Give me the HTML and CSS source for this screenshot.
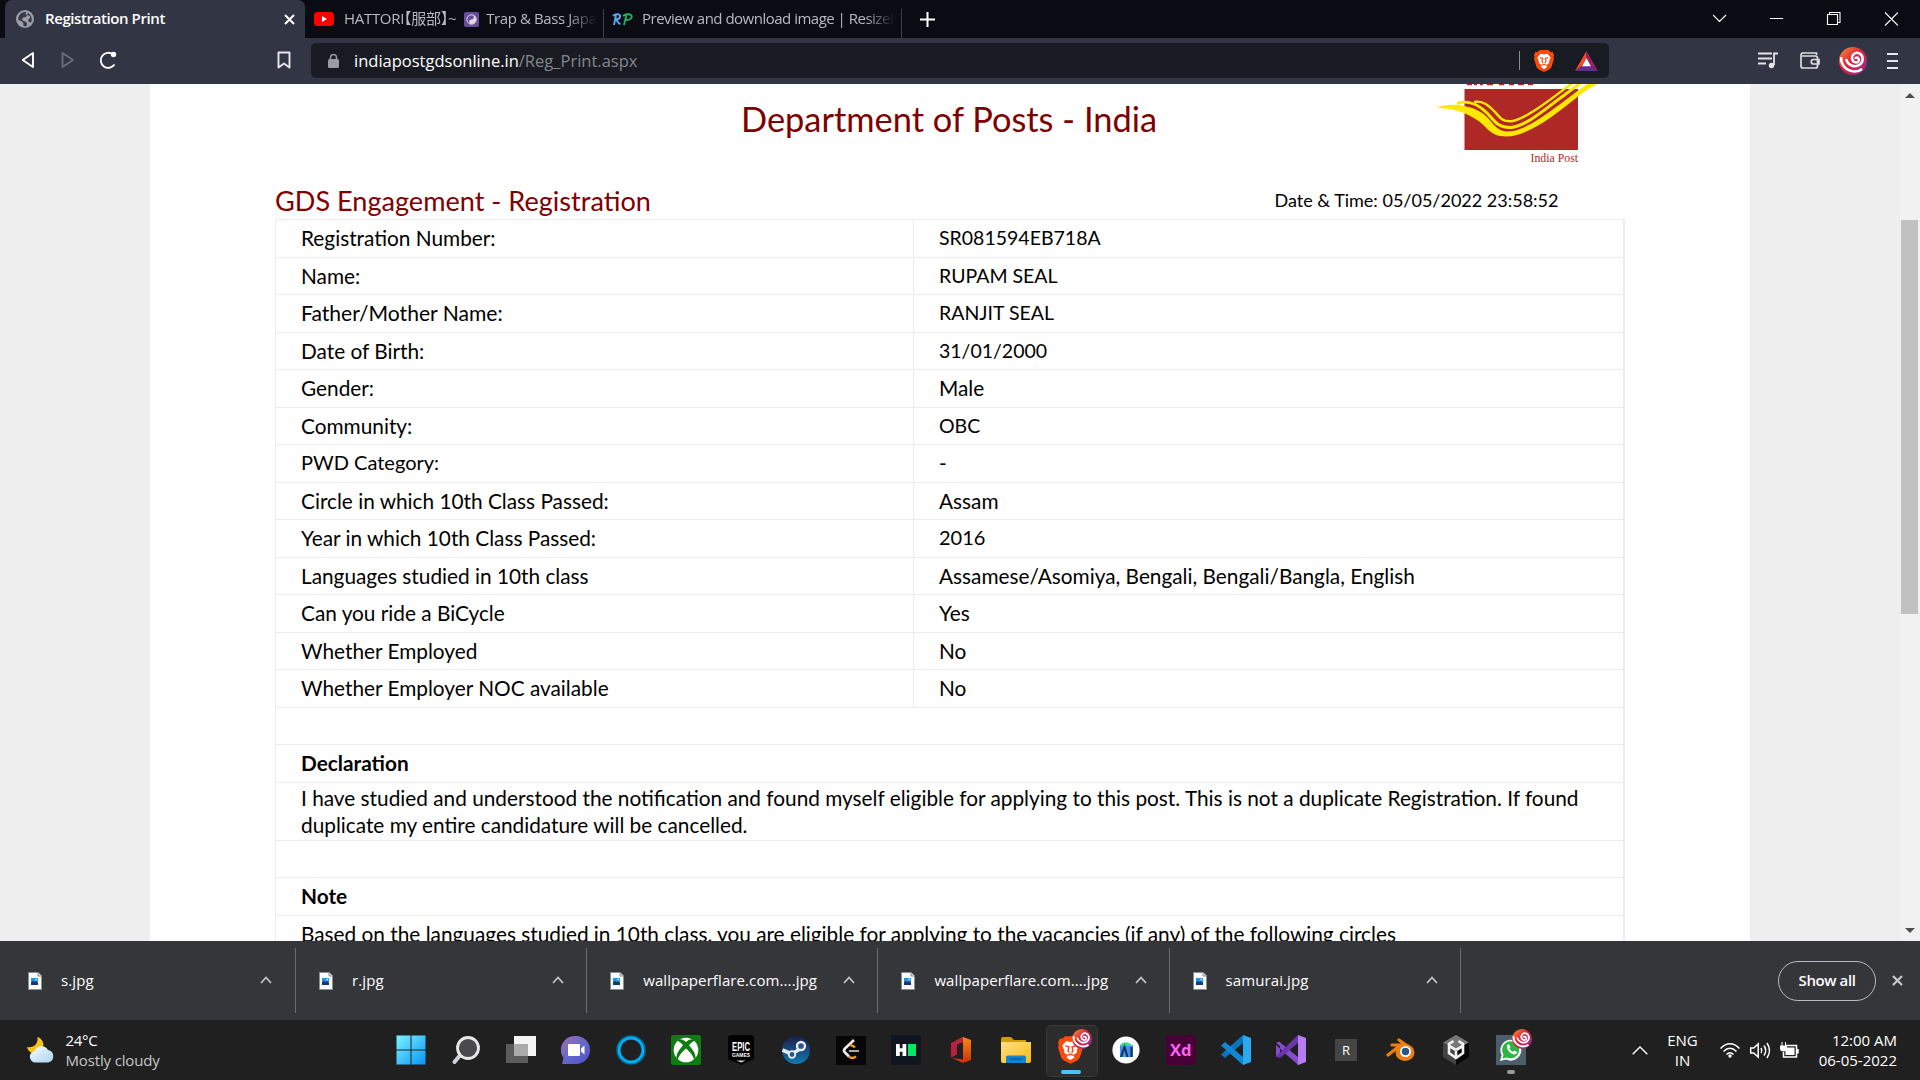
FILE: index.html
```html
<!DOCTYPE html>
<html lang="en">
<head>
<meta charset="utf-8">
<title>Registration Print</title>
<link rel="stylesheet" href="styles.css">
</head>
<body>
<svg class="defs" width="0" height="0">
  <defs>
    <linearGradient id="gSwirl" x1="0" y1="0" x2="1" y2="1"><stop offset="0" stop-color="#f6a030"/><stop offset=".45" stop-color="#e0203c"/><stop offset="1" stop-color="#8a2a9c"/></linearGradient>
    <linearGradient id="gWin" x1="0" y1="0" x2="1" y2="1"><stop offset="0" stop-color="#7df3ff"/><stop offset="1" stop-color="#0a94fb"/></linearGradient>
    <linearGradient id="gChat" x1="0" y1="0" x2="1" y2="1"><stop offset="0" stop-color="#a070b0"/><stop offset=".5" stop-color="#6468c8"/><stop offset="1" stop-color="#5050c8"/></linearGradient>
    <linearGradient id="gSteam" x1="0" y1="0" x2="0" y2="1"><stop offset="0" stop-color="#1a1c48"/><stop offset="1" stop-color="#127ab5"/></linearGradient>
    <linearGradient id="gOffice" x1="0" y1="0" x2="0" y2="1"><stop offset="0" stop-color="#f88a18"/><stop offset="1" stop-color="#d02c08"/></linearGradient>
    <linearGradient id="gFolder" x1="0" y1="0" x2="1" y2="1"><stop offset="0" stop-color="#ffe08a"/><stop offset="1" stop-color="#fbb90c"/></linearGradient>
    <linearGradient id="gCloud" x1="0" y1="0" x2="1" y2="1"><stop offset="0" stop-color="#fafcff"/><stop offset="1" stop-color="#a9d3f2"/></linearGradient>
    <symbol id="swirl" viewBox="0 0 28 28">
      <circle cx="14" cy="14" r="14" fill="url(#gSwirl)"/>
      <path d="M16.500 11c2.500-1.300 4.500 1.500 2.800 3.500-1.800 1.800-5.800.8-6.300-2.700C12.500 8 16 5 19.500 6c5 1.600 5.500 8.500 1.500 11.500-4.500 3.300-11.500 1.500-13.500-4.500" fill="none" stroke="#fff" stroke-width="2.500" stroke-linecap="round"/>
      <path d="M2.200 10C1.500 17.500 7 24 15.500 24.500c3 0 5.500-.8 7.500-2.500" fill="none" stroke="#fff" stroke-width="2.500"/>
    </symbol>
    <symbol id="brave" viewBox="0 0 20 22">
      <path d="M5.700 0h8.600L16.500 2l2-.2L20 5l-.6 1.800.6 2-2.600 8.400-1.800 2L10 22l-5.600-2.800-1.800-2L0 8.800l.6-2L0 5l1.500-3.200 2 .2z" fill="#fb4a0c"/>
      <path d="M10 4.500l3.400-.8 3.200 3.700-1.600 4 .2 1.600-3.200 2.200 1.200 1.800L10 19l-3.200-2 1.200-1.800L4.800 13l.2-1.600-1.600-4 3.200-3.700z" fill="#fff"/>
      <path d="M5.800 7.700l2.900.7-.6 3.100.9 1.700M14.200 7.700l-2.900.7.6 3.100-.9 1.700M8 15.200l2-.9 2 .9" fill="none" stroke="#fb4a0c" stroke-width="1.200"/>
    </symbol>
    <symbol id="file" viewBox="0 0 14 18">
      <path d="M.5.500h9.500l3.500 3.500v13.500H.5z" fill="#fbfbfb" stroke="#8f8f8f"/><path d="M10 .5V4h3.500" fill="#ddd" stroke="#8f8f8f"/>
      <path d="M3 6h7v7H3z" fill="#2196e8"/><path d="M3 13V10.500l2-1.700 1.600 1.500L8 9l2 2v2z" fill="#103a78"/><circle cx="8.200" cy="7.600" r=".8" fill="#fff"/>
    </symbol>
    <symbol id="caret" viewBox="0 0 12 8"><path d="M1 7l5-5.500L11 7" fill="none" stroke="#c4c5c8" stroke-width="1.800"/></symbol>
  </defs>
</svg>

<header class="tabs">
  <div class="tab active">
    <svg class="globe" viewBox="0 0 18 18"><circle cx="9" cy="9" r="9" fill="#9c9fa8"/><path d="M8 2C4 3 2 6 2.300 10l3 1 2 2 .2 3 2 .4c2-1 2-3 1-4L8 11l-2-1 1-2.500 3-.5 1-2-1.500-1 .5-2M12 3l-1 2 3 1v2l-2 2 1 2 2 .5c1.500-2 1-7-3-9.500" fill="#373a48"/></svg>
    <span class="title bold">Registration Print</span>
    <svg class="x" viewBox="0 0 11 11"><path d="M1 1l9 9M10 1l-9 9" stroke="#fff" stroke-width="2"/></svg>
  </div>
  <div class="tab second">
    <svg class="yt" viewBox="0 0 20 14"><rect width="20" height="14" rx="3.500" fill="#f00"/><path d="M8 4l5 3-5 3z" fill="#fff"/></svg>
    <div class="fade"><span class="title hattori">HATTORI【服部】~</span><svg class="yy" viewBox="0 0 15 15"><rect width="15" height="15" rx="2" fill="#6a4a9c"/><circle cx="7.500" cy="7.500" r="4.700" fill="none" stroke="#ddd"/><path d="M7.500 2.800a4.700 4.700 0 010 9.400 2.350 2.350 0 010-4.700 2.350 2.350 0 000-4.700" fill="#ddd"/></svg><span class="title">Trap &amp; Bass Japa</span></div>
  </div>
  <div class="tab third">
    <svg class="rp" viewBox="0 0 21 13"><path d="M2 12L4 2M1 3c3-3 8-2 7 1C7.500 6 5 6.500 3.500 6.500c2 .5 2 4 5 4.500" fill="none" stroke="#55a8ec" stroke-width="1.900"/><path d="M12 12l2.500-10M11 3c3-3 10-2 8.500 1.500C18.500 7 15 7 13.500 7" fill="none" stroke="#22b35a" stroke-width="1.900"/></svg>
    <div class="fade"><span class="title preview">Preview and download image | ResizeP</span></div>
  </div>
  <svg class="plus" viewBox="0 0 15 15"><path d="M7.500 0v15M0 7.500h15" stroke="#fff" stroke-width="2"/></svg>
  <svg class="winctl" viewBox="0 0 185 14" fill="none" stroke="#fff" stroke-width="1.100"><path d="M0 3l6.500 6.500L13 3M57 6.500h13M114.500 2.500h10v10h-10zM116.500 2.500V.5h10.500v10h-2M172 .5l13 13M185 .5l-13 13"/></svg>
</header>

<nav class="toolbar">
  <svg class="navs" viewBox="0 0 270 24" fill="none" stroke-width="1.900" stroke-linejoin="round"><path d="M11 4v14L.7 11z" stroke="#fff"/><path d="M40.500 4v14l10.500-7z" stroke="#686b78"/><path d="M92.500 15.500A7.500 7.500 0 1191 5.500" stroke="#fff"/><circle cx="91.500" cy="5.500" r="2.700" fill="#fff"/><path d="M256.500 3.500h11v15l-5.500-4-5.500 4z" stroke="#e8e8ec"/></svg>
  <div class="url">
    <svg class="lock" viewBox="0 0 11 14"><rect y="5" width="11" height="9" rx="1.500" fill="#9a9ca4"/><path d="M2.500 6V3.500a3 3 0 016 0V6" fill="none" stroke="#9a9ca4" stroke-width="1.500"/></svg>
    <span class="host">indiapostgdsonline.in</span><span class="path">/Reg_Print.aspx</span>
    <i class="bar"></i>
    <svg class="lion"><use href="#brave"/></svg>
    <svg class="bat" viewBox="0 0 23 20"><path d="M11.500 0v7L7 14.800 0 20z" fill="#ff4724"/><path d="M11.500 0L23 20l-7-5.200L11.500 7z" fill="#9e1f63"/><path d="M0 20h23l-7-5.200H7z" fill="#662d91"/><path d="M11.500 7L16 15.200H7z" fill="#fff"/></svg>
  </div>
  <svg class="list" viewBox="0 0 20 17" fill="none" stroke="#e4e4e8" stroke-width="1.800"><path d="M0 1.500h14M0 6.500h14M0 11.500h8M16 13V1.500h4"/><circle cx="13.500" cy="13.500" r="2.700" fill="#e4e4e8" stroke="none"/></svg>
  <svg class="wallet" viewBox="0 0 20 17" fill="none" stroke="#dcdce2" stroke-width="1.700"><path d="M16.500 3V1H3.500A2 2 0 001 3v11q0 2 2 2h12.500q2 0 2-2V6q0-2-2-2H2M19 7.500h-5.500a2.200 2.200 0 000 4.500H19z"/></svg>
  <svg class="avatar"><use href="#swirl"/></svg>
  <svg class="menu" viewBox="0 0 11 16"><path d="M0 1h11M0 8h11M0 15h11" stroke="#e8e8ec" stroke-width="2"/></svg>
</nav>

<main class="view">
  <div class="sheet">
    <div class="head">
      <h1>Department of Posts - India</h1>
      <svg class="post" viewBox="0 0 166 82">
        <path d="M30 .6h5M37 .6h3M43 .6h3M50 .6h6M62 .6h5M72 .6h5M81 .6h6M91 .6h5" stroke="#b02a25" stroke-width="1.300"/>
        <rect x="27.500" y="5" width="113.500" height="61" fill="#ae2825"/>
        <path d="M0 24C10 18.500 32 20 46 29.500C56 37 58 47.500 71 47.500C88 47.500 112 28 126 18C138 9 148 1 156-4H168C155 2 145 9 134 18C115 33 90 52.500 69 52.500C52 52 51 43 40 36C28 28 15 24 0 24z" fill="#ffe800"/>
        <path d="M20 19.500C30 16 41 20 50 29C58 37 60 43.500 73 43.500C88 43.500 112 22 126 12L150-6" fill="none" stroke="#ffe800" stroke-width="3"/>
        <path d="M37 18C46 16 52 22 58 28C64 35 66 37.500 74 37.300C88 36 114 15 134 0L142-6" fill="none" stroke="#ffe800" stroke-width="2.400"/>
        <text class="ip" x="141" y="78" text-anchor="end" textLength="47.500" lengthAdjust="spacingAndGlyphs">India Post</text>
      </svg>
    </div>
    <div class="sub"><h2>GDS Engagement - Registration</h2><span class="when">Date &amp; Time: 05/05/2022 23:58:52</span></div>
    <table class="grid">
      <tr><td>Registration Number:</td><td class="id">SR081594EB718A</td></tr>
      <tr><td>Name:</td><td class="caps">RUPAM SEAL</td></tr>
      <tr><td class="wide">Father/Mother Name:</td><td class="caps">RANJIT SEAL</td></tr>
      <tr><td>Date of Birth:</td><td class="caps">31/01/2000</td></tr>
      <tr><td>Gender:</td><td>Male</td></tr>
      <tr><td>Community:</td><td class="caps">OBC</td></tr>
      <tr><td class="mid">PWD Category:</td><td>-</td></tr>
      <tr><td>Circle in which 10th Class Passed:</td><td>Assam</td></tr>
      <tr><td>Year in which 10th Class Passed:</td><td class="mid">2016</td></tr>
      <tr><td>Languages studied in 10th class</td><td>Assamese/Asomiya, Bengali, Bengali/Bangla, English</td></tr>
      <tr><td>Can you ride a BiCycle</td><td>Yes</td></tr>
      <tr><td>Whether Employed</td><td>No</td></tr>
      <tr><td>Whether Employer NOC available</td><td>No</td></tr>
      <tr><td colspan="2"></td></tr>
      <tr><td colspan="2" class="b">Declaration</td></tr>
      <tr class="tall"><td colspan="2">I have studied and understood the notification and found myself eligible for applying to this post. This is not a duplicate Registration. If found<br>duplicate my entire candidature will be cancelled.</td></tr>
      <tr><td colspan="2"></td></tr>
      <tr><td colspan="2" class="b">Note</td></tr>
      <tr><td colspan="2">Based on the languages studied in 10th class, you are eligible for applying to the vacancies (if any) of the following circles</td></tr>
    </table>
  </div>
  <div class="scroll">
    <svg viewBox="0 0 10 5"><path d="M0 5l5-5 5 5z" fill="#505050"/></svg>
    <i></i>
    <svg viewBox="0 0 10 5"><path d="M0 0l5 5 5-5z" fill="#505050"/></svg>
  </div>
</main>

<section class="downloads">
  <div class="dl"><svg class="f"><use href="#file"/></svg><span>s.jpg</span><svg class="c"><use href="#caret"/></svg></div>
  <div class="dl"><svg class="f"><use href="#file"/></svg><span>r.jpg</span><svg class="c"><use href="#caret"/></svg></div>
  <div class="dl"><svg class="f"><use href="#file"/></svg><span>wallpaperflare.com....jpg</span><svg class="c"><use href="#caret"/></svg></div>
  <div class="dl"><svg class="f"><use href="#file"/></svg><span>wallpaperflare.com....jpg</span><svg class="c"><use href="#caret"/></svg></div>
  <div class="dl"><svg class="f"><use href="#file"/></svg><span>samurai.jpg</span><svg class="c"><use href="#caret"/></svg></div>
  <button class="all">Show all</button>
  <svg class="dx" viewBox="0 0 11 11"><path d="M1 1l9 9M10 1l-9 9" stroke="#c8c8cc" stroke-width="2.200"/></svg>
</section>

<footer class="taskbar">
  <div class="weather">
    <svg viewBox="0 0 28 26"><path d="M10.500 0C18 2.500 19 13 10 16 5 17.500 1 14.500 0 10 6 11.500 11.500 7 10.500 0z" fill="#fcc21b"/><path d="M8.500 25.500a5.700 5.700 0 01-1-11.300A7.500 7.500 0 0121 13a6.400 6.400 0 01.5 12.500z" fill="url(#gCloud)"/></svg>
    <div><span class="deg">24°C</span><span class="sky">Mostly cloudy</span></div>
  </div>
  <div class="apps">
    <svg viewBox="0 0 30 30"><path d="M.5.500h14v14H.5zM15.500.500h14v14h-14zM.5 15.500h14v14H.5zM15.500 15.500h14v14h-14z" fill="url(#gWin)"/></svg>
    <svg viewBox="0 0 30 30"><path d="M10.500 18.500L3.500 27" stroke="#cfd2d6" stroke-width="4" stroke-linecap="round"/><circle cx="17" cy="13" r="10.500" fill="#4a4a4c" stroke="#e6e8ea" stroke-width="2.800"/></svg>
    <svg viewBox="0 0 30 30"><path d="M8 1h22v20H8z" fill="#f4f4f4"/><path d="M0 9h22v19H0z" fill="#5c5c5c"/><path d="M8 9h14v12H8z" fill="#aaa"/></svg>
    <svg viewBox="0 0 30 30"><path d="M15 1a14 14 0 110 28H1l1.500-6A14 14 0 0115 1z" fill="url(#gChat)"/><rect x="7" y="9" width="12" height="12" rx="1" fill="#fff"/><path d="M20 13.500l3.500-3v9l-3.500-3z" fill="#fff"/></svg>
    <svg viewBox="0 0 30 30"><circle cx="15" cy="15" r="12.500" fill="none" stroke="#076a9c" stroke-width="4.500"/><circle cx="15" cy="15" r="12" fill="none" stroke="#00b4f4" stroke-width="2.400"/></svg>
    <svg viewBox="0 0 30 30"><rect width="30" height="30" rx="2.500" fill="#107c10"/><circle cx="15" cy="15" r="12.300" fill="#fff"/><path d="M7 4.500c3-1 6 .5 8 2.500 2-2 5-3.500 8-2.500l1 1.500c-2 0-4 2-6 4.200 4 4.600 7 9 6.500 13l-1.500 1.300C22 20 18 16 15 13.500 12 16 8 20 7 24.500l-1.500-1.300c-.5-4 2.500-8.400 6.500-13C10 8 8 6 6 6z" fill="#107c10"/></svg>
    <svg viewBox="0 0 30 30"><path d="M4 0h22l2 2v22l-13 6-13-6V2z" fill="#000"/><text class="epic" x="6" y="16" textLength="18" lengthAdjust="spacingAndGlyphs">EPIC</text><text class="games" x="6" y="22.200" textLength="18" lengthAdjust="spacingAndGlyphs">GAMES</text><path d="M10.500 25.500h9L15 27.500z" fill="#ddd"/></svg>
    <svg viewBox="0 0 30 30"><circle cx="15" cy="15" r="14" fill="url(#gSteam)"/><path d="M1.500 15l9 4 7-4 .5-5" fill="none" stroke="#e6e9ee" stroke-width="3.600"/><circle cx="20" cy="11" r="4" fill="#29588c" stroke="#eceef1" stroke-width="2.300"/><circle cx="11" cy="19.500" r="3.300" fill="#1b5c93" stroke="#eceef1" stroke-width="1.800"/></svg>
    <svg viewBox="0 0 30 30"><rect y="1" width="30" height="29" fill="#060606"/><path d="M18 5L9 13.500q-2 2 0 4l4 4" fill="none" stroke="#eee" stroke-width="2.600"/><path d="M14 10.500q2-1 5 2M13 21.500q3 3 7 0" fill="none" stroke="#f59d18" stroke-width="2.400"/><path d="M13 16h10" stroke="#aaa" stroke-width="2"/></svg>
    <svg viewBox="0 0 30 30"><path d="M0 0h30v30H0z" fill="#101620"/><path d="M5 9h3.800v4.200h2.700V9h3.800v12h-3.800v-4.200H8.800V21H5z" fill="#fff"/><path d="M17 9h8v12h-8z" fill="#00ea64"/></svg>
    <svg viewBox="0 0 30 30"><path d="M5 8.500L17 2l8 3v20l-8 3-11-5 11 1.500V7l-6 2v10l-6 3.500z" fill="url(#gOffice)"/><path d="M5 8.500L17 2v5l-6 2v10l-6 3.500z" fill="#b8203c"/></svg>
    <svg viewBox="0 0 30 30"><path d="M0 4q0-2 2-2h8l3 3h12v6H0z" fill="#d59b0a"/><path d="M0 7h30v19q0 2-2 2H2q-2 0-2-2z" fill="url(#gFolder)"/><path d="M5 28v-6q0-1.500 1.500-1.500h17q1.500 0 1.500 1.500v6z" fill="#1285d2"/><path d="M9 24h12" stroke="#075a9c" stroke-width="1.500"/></svg>
    <span class="on"><svg class="lionbig"><use href="#brave"/></svg><svg class="badge"><use href="#swirl"/></svg></span>
    <svg viewBox="0 0 30 30"><circle cx="15" cy="15" r="13.600" fill="#fdfdfd"/><path d="M9 10h13v12H9z" fill="#478df0"/><path d="M9 11c1-5 10-5 12 0z" fill="#3ddc84"/><path d="M10 22l3.500-10 3 10M20.500 12v10" fill="none" stroke="#083552" stroke-width="2"/></svg>
    <svg viewBox="0 0 30 30"><rect width="30" height="30" rx="4" fill="#470137"/><text class="xd" x="4" y="21" textLength="21.500" lengthAdjust="spacingAndGlyphs">Xd</text></svg>
    <svg viewBox="0 0 30 30"><path d="M22 0v8L4 23l-4-3.500z" fill="#0b74be"/><path d="M22 30v-8L4 7 0 10.500z" fill="#1087d4"/><path d="M22 0l8 3v24l-8 3z" fill="#29aaf2"/></svg>
    <svg viewBox="0 0 30 30"><path d="M0 8l3-1.500L22 22v8L0 10zM0 8v14l4-3V11z" fill="#854cc7"/><path d="M22 0v8L4 23l-4-1.500z" fill="#6b35ad"/><path d="M22 0l8 3v24l-8 3z" fill="#b77cf2"/></svg>
    <svg viewBox="0 0 30 30"><path d="M4 4h22v22H4z" fill="#454545"/><text class="r" x="15" y="20" text-anchor="middle">R</text></svg>
    <svg viewBox="0 0 30 30"><path d="M13 5l10 7M6 10h13M2 20l14-11" stroke="#ec7f14" stroke-width="3.200" stroke-linecap="round"/><ellipse cx="19" cy="17.500" rx="9.500" ry="8.500" fill="#ec7f14"/><circle cx="19.500" cy="16.500" r="5.500" fill="#fff"/><circle cx="19.500" cy="16.500" r="3.700" fill="#265787"/></svg>
    <svg viewBox="0 0 30 30"><path d="M15 0l13 7.500L15 15 2 7.500z" fill="#777"/><path d="M2 7.500L15 15v15L2 22z" fill="#444"/><path d="M28 7.500L15 15v15l13-8z" fill="#080808"/><path d="M15 16v8M15 15L8 11M15 15l7-4M12.500 6L8 9v9l7 5 7-5V9l-4.500-3" fill="none" stroke="#f2f2f2" stroke-width="2.600"/></svg>
    <span class="wa"><svg viewBox="0 0 30 30"><path d="M0 0h30v30H0z" fill="#4b5f6b"/><path d="M4 26l1.500-6A10.500 10.500 0 1110 24.500z" fill="#fff"/><path d="M6.500 23.500l1-4A8.500 8.500 0 1111 22.500z" fill="#2cb742"/><path d="M11 11c0-2 2-2 2.500-1l1 2-1 1.500c1 2 2 2.700 3.500 3.300l1.500-1.300 2.500 1.500c0 2-2.500 3-4.500 2-3-1.200-5.500-4-5.500-8z" fill="#fff"/></svg><svg class="badge"><use href="#swirl"/></svg></span>
  </div>
  <svg class="up" viewBox="0 0 16 9"><path d="M.7 8.300L8 1l7.300 7.300" fill="none" stroke="#fff" stroke-width="1.400"/></svg>
  <div class="lang"><span>ENG</span><span>IN</span></div>
  <svg class="tray" viewBox="0 0 80 17" fill="none" stroke="#fff" stroke-width="1.500"><path d="M.5 6.500q9.500-9.500 19 0M3.500 9.500q6.500-6.500 13 0M6.500 12.500q3.500-3.500 7 0"/><circle cx="10" cy="14" r="1.700" fill="#fff" stroke="none"/><path d="M30.700 6h3l4.500-4v13l-4.500-4h-3zM41 6q1.600 2.500 0 5M44 3.500q3.400 5 0 10M47 1q5 7.500 0 15"/><path d="M65 3.500h11.500v11.500H63.500v-5M78 7v4.500"/><path d="M66 5.500h8.500v7.500H65.500V9z" fill="#fff" stroke="none"/><path d="M60 3.500h7v3.500q-.5 2.500-3.500 2.500T60 7zM61.500 0h1v4h-1zM65 0h1v4h-1z" fill="#fff" stroke="none"/></svg>
  <div class="clock"><span>12:00 AM</span><span>06-05-2022</span></div>
</footer>
</body>
</html>
```

FILE: styles.css
```css
* { box-sizing: border-box; }
html, body { margin: 0; }
body { width: 1920px; height: 1080px; overflow: hidden; display: flex; flex-direction: column; font-family: "Open Sans", "Noto Sans", "Noto Sans CJK JP", sans-serif; font-size: 15px; }
svg { display: block; flex: none; }
.defs { position: absolute; }

.tabs { height: 38px; background: #0b0b14; display: flex; align-items: center; padding-left: 5px; flex: none; }
.tab { height: 38px; display: flex; align-items: center; color: #b9bac0; font-size: 15px; flex: none; }
.title { white-space: nowrap; letter-spacing: -0.4px; line-height: 22px; padding-bottom: 2px; }
.hattori { font-feature-settings: "halt"; letter-spacing: -0.3px; font-family: "Open Sans", "Noto Sans CJK JP", sans-serif; }
.preview { letter-spacing: -0.5px; }
.active { width: 300px; background: #323543; border-radius: 7px 7px 0 0; padding: 0 10px 0 11px; color: #fff; }
.globe { width: 18px; height: 18px; margin-right: 11px; }
.bold { font-weight: 600; }
.x { width: 11px; height: 11px; margin-left: auto; }
.second { width: 299px; padding-left: 9px; }
.second::after, .third::after { content: ""; width: 1px; height: 29px; background: #3f4049; margin: 9px 0 0 auto; }
.yt { width: 20px; height: 14px; margin-right: 10px; }
.fade { width: 253px; overflow: hidden; display: flex; align-items: center; -webkit-mask-image: linear-gradient(90deg, #000 88%, transparent); mask-image: linear-gradient(90deg, #000 88%, transparent); }
.yy { width: 15px; height: 15px; margin: 0 7px 0 8px; }
.third { width: 298px; padding-left: 8px; }
.rp { width: 21px; height: 13px; margin-right: 9px; }
.plus { width: 15px; height: 15px; margin-left: 18px; }
.winctl { width: 185px; height: 14px; margin-left: auto; margin-right: 22px; }

.toolbar { height: 46px; background: #323543; display: flex; align-items: center; flex: none; padding-left: 22px; padding-bottom: 1px; }
.navs { width: 270px; height: 24px; margin-right: 19px; }
.url { width: 1298px; height: 35px; background: #191b22; border-radius: 5px; display: flex; align-items: center; padding: 0 11px 0 17px; font-size: 16.5px; }
.lock { width: 11px; height: 14px; margin-right: 15px; }
.host { color: #fff; padding-bottom: 1px; }
.path { color: #85878e; padding-bottom: 1px; }
.bar { width: 1px; height: 19px; background: #8a8b90; margin-left: auto; margin-right: 14px; }
.lion { width: 20px; height: 22px; margin-right: 21px; }
.bat { width: 23px; height: 20px; }
.list { width: 20px; height: 17px; margin-left: 149px; }
.wallet { width: 20px; height: 17px; margin-left: 22px; }
.avatar { width: 28px; height: 28px; margin-left: 19px; }
.menu { width: 11px; height: 16px; margin-left: 20px; }

.view { height: 857px; flex: none; overflow: hidden; background: #eee; display: flex; padding-left: 150px; color: #000; font-family: Lato, sans-serif; }
.sheet { width: 1600px; background: #fff; padding-left: 125px; }
.head { display: flex; height: 82px; }
h1, h2 { font-weight: 400; color: #800000; margin: 0; white-space: nowrap; }
h1 { font-size: 34.4px; line-height: 40px; margin: 15px 0 0 466px; width: 696px; }
.post { width: 166px; height: 82px; }
.ip { font-family: "Liberation Serif", serif; font-size: 12px; fill: #b02a25; }
.sub { display: flex; justify-content: space-between; width: 1283.500px; height: 53px; }
h2 { font-size: 27.1px; line-height: 34px; margin-top: 18px; }
.when { font-size: 18px; line-height: 24px; margin-top: 22px; white-space: nowrap; }
.grid { width: 1350px; border-collapse: separate; border-spacing: 0; table-layout: fixed; border-top: 1px solid #ececec; border-left: 1px solid #ececec; border-right: 1px solid #ececec; font-size: 20.8px; line-height: 27px; }
.grid tr { height: 37.5px; }
.grid td { border-bottom: 1px solid #ececec; border-right: 1px solid #ececec; padding: 0 0 1px 25px; white-space: nowrap; }
.grid td:first-child { width: 638px; }
.grid .tall { height: 58px; }
.grid .caps { font-size: 19.5px; }
.grid .id { font-size: 19.5px; }
.grid .mid { font-size: 20px; }
.grid .wide { font-size: 21.1px; }
.b { font-weight: 700; }
.scroll { width: 20px; margin-left: 150px; background: #f1f1f1; display: flex; flex-direction: column; align-items: center; padding: 9px 1px 8px 0; }
.scroll svg { width: 10px; height: 5px; }
.scroll i { width: 17px; height: 394px; background: #c1c1c1; margin: 122px 0 auto; }

.downloads { height: 79px; flex: none; background: #35363a; display: flex; align-items: center; color: #fff; }
.dl { width: 291.200px; height: 65px; border-right: 1px solid #6b6c70; display: flex; align-items: center; padding: 0 22px 0 23px; }
.dl:first-child { width: 296px; padding: 0 23px 0 28px; }
.dl span { letter-spacing: 0.1px; padding-bottom: 2px; }
.dl .f { width: 14px; height: 18px; margin-right: 19px; }
.dl .c { width: 12px; height: 8px; margin-left: auto; margin-bottom: 1px; }
.all { width: 98px; height: 40px; border: 1px solid #b9bac6; border-radius: 20px; background: none; color: #fff; font: 600 15px "Open Sans", sans-serif; letter-spacing: -0.4px; margin: 0 16px 0 auto; padding: 0 0 2px; }
.dx { width: 11px; height: 11px; margin-right: 17px; }

.taskbar { height: 60px; flex: none; background: #202020; display: flex; align-items: center; color: #fff; line-height: 20px; }
.weather { width: 395.500px; padding-left: 27px; display: flex; align-items: center; }
.weather svg { width: 28px; height: 26px; margin-right: 10.500px; }
.weather div, .lang, .clock { display: flex; flex-direction: column; white-space: nowrap; }
.deg { letter-spacing: -0.3px; }
.sky { color: #c6c6c6; letter-spacing: -0.15px; }
.apps { display: flex; align-items: center; gap: 25px; }
.apps > svg, .apps > span { width: 30px; height: 30px; flex: none; }
.on { position: relative; display: flex; justify-content: center; }
.on::before { content: ""; position: absolute; left: -10px; top: -10px; width: 50px; height: 50px; background: #2c2c2c; border: 1px solid #393939; border-radius: 5px; }
.on::after { content: ""; position: absolute; left: 5px; top: 35px; width: 20px; height: 4px; border-radius: 2px; background: #4cc2ff; }
.lionbig { width: 25px; height: 30px; position: relative; }
.badge { position: absolute; width: 20px; height: 20px; left: 16px; top: -6px; }
.wa { position: relative; }
.wa > svg:first-child { width: 30px; height: 30px; }
.wa::after { content: ""; position: absolute; left: 11px; top: 35px; width: 8px; height: 4px; border-radius: 2px; background: #9a9a9a; }
.epic { font: 700 12px "Liberation Sans", sans-serif; fill: #fff; }
.games { font: 700 5px "Liberation Sans", sans-serif; fill: #fff; }
.xd { font: 700 16px "Open Sans", sans-serif; fill: #ff61f6; }
.r { font: 13px "Open Sans", sans-serif; fill: #fff; }
.up { width: 16px; height: 9px; margin-left: 106px; }
.lang { width: 70px; align-items: center; }
.tray { width: 80px; height: 17px; margin-left: 2px; }
.clock { margin-left: auto; margin-right: 23px; align-items: flex-end; }
```
